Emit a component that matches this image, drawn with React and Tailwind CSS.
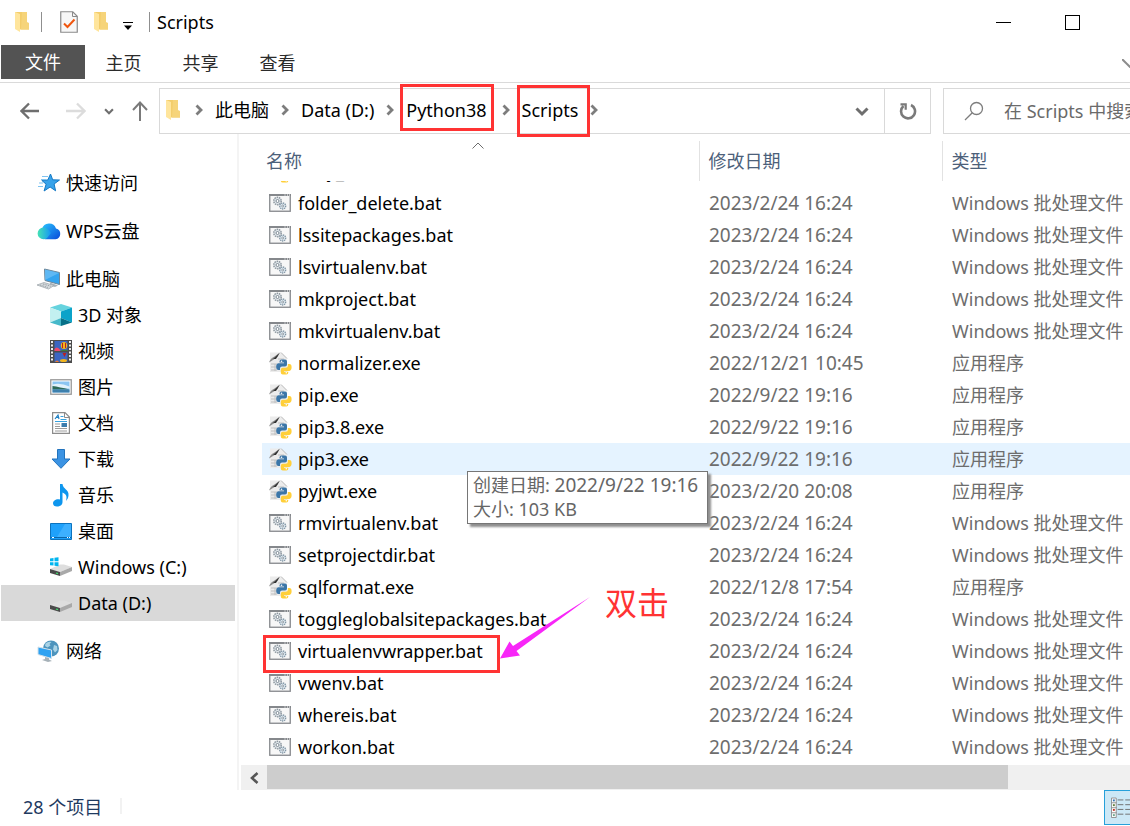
import React, { useState } from "react";

const files = [
  { name: "folder_delete.bat", date: "2023/2/24 16:24" },
  { name: "lssitepackages.bat", date: "2023/2/24 16:24" },
  { name: "lsvirtualenv.bat", date: "2023/2/24 16:24" },
  { name: "mkproject.bat", date: "2023/2/24 16:24" },
  { name: "mkvirtualenv.bat", date: "2023/2/24 16:24" },
  { name: "normalizer.exe", date: "2022/12/21 10:45" },
  { name: "pip.exe", date: "2022/9/22 19:16" },
  { name: "pip3.8.exe", date: "2022/9/22 19:16" },
  { name: "pip3.exe", date: "2022/9/22 19:16", hovered: true },
  { name: "pyjwt.exe", date: "2023/2/20 20:08" },
  { name: "rmvirtualenv.bat", date: "2023/2/24 16:24" },
  { name: "setprojectdir.bat", date: "2023/2/24 16:24" },
  { name: "sqlformat.exe", date: "2022/12/8 17:54" },
  { name: "toggleglobalsitepackages.bat", date: "2023/2/24 16:24" },
  { name: "virtualenvwrapper.bat", date: "2023/2/24 16:24", marked: true },
  { name: "vwenv.bat", date: "2023/2/24 16:24" },
  { name: "whereis.bat", date: "2023/2/24 16:24" },
  { name: "workon.bat", date: "2023/2/24 16:24" },
];

function FolderIcon() {
  return (
    <svg width="16" height="22" viewBox="0 0 16 22" className="shrink-0">
      <path d="M1 1h12v16l2 .5v1H5z" fill="#f3cd6b" />
      <path d="M8 1h5v10l2 1v6.5H7z" fill="#f6d47a" />
      <path d="M1 1l5 2v18l-5-3z" fill="#ffe59c" />
    </svg>
  );
}

function TaskIcon() {
  return (
    <svg width="18" height="22" viewBox="0 0 18 22">
      <path d="M.75.75h12l4.5 4.5v16H.75z" fill="#f7f7f7" stroke="#8a8a8a" strokeWidth="1.2" />
      <path d="M12.5 1v4.5H17" fill="none" stroke="#8a8a8a" />
      <path d="M4 12.5l3.5 3.5 7-7.5" fill="none" stroke="#f0560e" strokeWidth="2" />
    </svg>
  );
}

function CrumbArrow() {
  return (
    <svg width="8" height="12" viewBox="0 0 8 12" className="shrink-0">
      <path d="M1.5 1.5L6 6l-4.5 4.5" fill="none" stroke="#7d7d7d" strokeWidth="2.8" />
    </svg>
  );
}

function DownArrow({ size = 14 }) {
  return (
    <svg width={size} height={size} viewBox="0 0 14 14">
      <path d="M1.5 4.5L7 10l5.5-5.5" fill="none" stroke="#6e6e6e" strokeWidth="3" />
    </svg>
  );
}

function BatIcon() {
  return (
    <svg width="22" height="18" viewBox="0 0 22 18" className="shrink-0">
      <rect x=".75" y=".75" width="20.5" height="16.5" fill="#f7f7f7" stroke="#85888c" strokeWidth="1.3" />
      <path d="M0 1h22" stroke="#85888c" strokeWidth="2" />
      <path d="M15.5 1h1M18 1h1M20 1h1" stroke="#fff" />
      <circle cx="8.5" cy="7" r="3.7" fill="#dfe5ea" stroke="#8d979f" strokeWidth="1.5" strokeDasharray="1.5 .8" />
      <circle cx="8.5" cy="7" r="1.5" fill="#fff" stroke="#7f8b95" />
      <circle cx="13.7" cy="12" r="3" fill="#dce7ef" stroke="#8296a5" strokeWidth="1.3" strokeDasharray="1.3 .7" />
      <circle cx="13.7" cy="12" r="1" fill="#fff" stroke="#7f8b95" strokeWidth=".8" />
    </svg>
  );
}

function ExeIcon() {
  return (
    <svg width="24" height="24" viewBox="0 0 24 24" className="-ml-px -mr-px shrink-0">
      <path d="M2 1.5h11l6 6V21H2z" fill="#ececec" />
      <path d="M13 1.5l6 6" stroke="#b9b9b9" />
      <path d="M3 13h6M3 16h6M3 19h6M10 8h6M7 13v7" stroke="#c0c0c0" />
      <path d="M1 11.5c1-3 3-5 5.5-6L12 1.500 9.500 6 5 9z" fill="#8a8a8a" />
      <path d="M5 8l6.500-6-3.500 6z" fill="#333" />
      <path d="M13.500 8.500h3.500q2 0 2 2v3q0 2-2 2h-3q-2 0-2 2v1.500h-1.500q-2.300 0-2.300-3.200t2.300-3.500H16v-.8h-4.500v-1q0-2 2-2z" fill="#3b76a8" />
      <path d="M18.300 23.500h-3.500q-2 0-2-2v-2.800q0-2 2-2h3q2 0 2-2V13h1.500q2.300 0 2.300 3.300t-2.300 3.700H16v.7h4.300v.8q0 2-2 2z" fill="#ffcf3a" />
      <circle cx="13.500" cy="10.300" r=".8" fill="#fff" />
      <circle cx="18.300" cy="21.800" r=".8" fill="#fff" />
    </svg>
  );
}

function QuickAccessIcon() {
  return (
    <svg width="24" height="22" viewBox="0 0 24 22">
      <path d="M13.500 2l2.200 5.800 6.800.2-5.400 4 1.500 6.800-5.500-3.800-6 4 2-6.800-4.300-3.800 6-.4z" fill="#38a3ea" stroke="#1478c4" />
      <path d="M5 4.500h6M4 7.500h5M2 11h4M1 14.500h5" stroke="#7fc3f0" strokeWidth="1.200" />
    </svg>
  );
}

function CloudIcon() {
  return (
    <svg width="24" height="22" viewBox="0 0 24 22">
      <defs>
        <linearGradient id="cloudBack" x1="0" y1="0" x2="1" y2="1">
          <stop offset="0" stopColor="#29c3ff" />
          <stop offset="1" stopColor="#0a48d8" />
        </linearGradient>
        <linearGradient id="cloudFront" x1="0" y1="0" x2="1" y2="0">
          <stop offset="0" stopColor="#45e3b5" />
          <stop offset="1" stopColor="#1596f5" />
        </linearGradient>
      </defs>
      <path d="M5 9a7.300 7.300 0 0 1 14-.5 5.500 5.500 0 0 1-.5 10.800H8z" fill="url(#cloudBack)" />
      <path d="M6.500 7.500c3.500 0 5.500 2.500 7.500 5.500l-4 5q-1.200 1.300-3.500 1.300a5.900 5.900 0 0 1 0-11.800z" fill="url(#cloudFront)" />
    </svg>
  );
}

function ComputerIcon() {
  return (
    <svg width="24" height="22" viewBox="0 0 24 22">
      <path d="M7.500 1l15 3.500v12L8 12.500z" fill="#34a4ef" stroke="#6f8799" />
      <path d="M8 1.500l14 3.500-14 7z" fill="#7cc6f6" opacity=".6" />
      <path d="M13 14.500v3l5 1.500 3-1.500-4-1.500z" fill="#a9b3ba" />
      <path d="M0 17l7-2.500 10 3-5.500 3.500z" fill="#d5dadd" stroke="#a2a9ae" strokeWidth=".8" />
      <path d="M3 17l8 2.500M6 16l8 2.300" stroke="#9aa2a8" strokeDasharray="1.500 1" />
    </svg>
  );
}

function CubeIcon() {
  return (
    <svg width="22" height="22" viewBox="0 0 22 22">
      <path d="M11 0l11 3.500-11 4L0 3.500z" fill="#66d3de" />
      <path d="M0 3.500l11 4V14L0 18.500z" fill="#c3f0f0" />
      <path d="M22 3.500l-11 4V14l11 4.500z" fill="#0ba3c9" />
      <path d="M0 18.500L11 14v8z" fill="#46b9ca" />
      <path d="M22 18.500L11 14v8z" fill="#077189" />
    </svg>
  );
}

function VideoIcon() {
  return (
    <svg width="22" height="23" viewBox="0 0 22 23">
      <path d="M0 0h22v23H0z" fill="#4c4c4c" />
      <path d="M2 1v21M20 1v21" stroke="#ededed" strokeWidth="2" strokeDasharray="2 1.500" />
      <path d="M4.500 1h13v10h-13zM4.500 12.500h13V22h-13z" fill="#3c66c2" />
      <path d="M4.500 9q2-3 5 0l1 2h-6z" fill="#ef4a6d" />
      <path d="M10 11q3-2 7.500-1v1z" fill="#3e7d3a" />
      <ellipse cx="14" cy="5.500" rx="3.200" ry="3.500" fill="#f2b51c" />
      <path d="M12.500 3v5M15.500 3v5" stroke="#b92120" />
      <path d="M12.500 13h4l-2 4z" fill="#b92120" />
      <ellipse cx="13.500" cy="20.500" rx="3.500" ry="1.500" fill="#f2b51c" />
      <path d="M5 22q2-3 4 0z" fill="#ef7a2c" />
    </svg>
  );
}

function PictureIcon() {
  return (
    <svg width="22" height="16" viewBox="0 0 22 16">
      <rect x=".75" y=".75" width="20.500" height="14.500" fill="#fff" stroke="#9a9a9a" strokeWidth="1.300" />
      <path d="M2.500 2.500h17v11h-17z" fill="#8bc5f2" />
      <path d="M2.500 5.500q8-2 17 2v2h-17z" fill="#e1f1fb" />
      <path d="M2.500 7q7 1 17 3.500h-17z" fill="#2f6b59" />
      <path d="M2.500 10.500h17v3h-17z" fill="#3d80ad" />
    </svg>
  );
}

function DocumentIcon() {
  return (
    <svg width="18" height="22" viewBox="0 0 18 22">
      <path d="M.6.600h12.400l4.400 4.400v16.400H.6z" fill="#fff" stroke="#8c8c8c" strokeWidth="1.200" />
      <path d="M12.500 1v4.500H17" fill="none" stroke="#8c8c8c" />
      <path d="M3 7L6 3l1 4M4 5.500h3" fill="none" stroke="#1d80c3" strokeWidth="1.200" />
      <path d="M8.500 4.500h3M8.500 7.500h6M3 9.500h12" stroke="#37a2df" />
      <path d="M3 12h5M3 14.500h5M3 16.500h12M3 19h12" stroke="#9c9c9c" />
      <path d="M9.500 11h5.500v4H9.500z" fill="#3b7cad" />
    </svg>
  );
}

function DownloadIcon() {
  return (
    <svg width="20" height="20" viewBox="0 0 20 20">
      <path d="M6.500.500h7v9.500h5.500L10 19.300 1 10h5.500z" fill="#3b93e3" stroke="#2273bd" />
    </svg>
  );
}

function MusicIcon() {
  return (
    <svg width="18" height="23" viewBox="0 0 18 23">
      <path d="M8 0h2.500c.5 5.500 6.500 5 6 11.500-.2 2.500-1.300 4-2.500 5.500 1.200-5 .5-6.500-3.500-8.500v9.500c0 3-2.500 4.500-5.500 4.500-2.500 0-4-1.300-4-3.300 0-2.700 3.500-4.700 7-3.700z" fill="#0e96ee" />
    </svg>
  );
}

function DesktopIcon() {
  return (
    <svg width="22" height="17" viewBox="0 0 22 17">
      <path d="M.5.500h21v16H.5z" fill="#1fa1fb" stroke="#0b73bf" />
      <path d="M15 1h6v13H7z" fill="#3db0ff" />
      <path d="M1 14.500h20" stroke="#0b66aa" />
      <path d="M2 14.500h2M17 14.500h1M19 14.500h1" stroke="#fff" />
    </svg>
  );
}

function DriveIcon({ windows }) {
  return (
    <svg width="22" height="20" viewBox="0 0 22 20">
      <path d="M0 12l10-4.500h4L22 10l-12 5z" fill="#dedede" />
      <path d="M10 15l12-5v4l-12 5z" fill="#a9a9a9" />
      <path d="M0 12l10 3v4L0 16z" fill="#4a4a4a" />
      <path d="M6 16l2 .6" stroke="#44e06f" strokeWidth="1.300" />
      {windows && <path d="M0 1.500l3.500-.5v3.300H0zM4.500.800L8.500.300v4h-4zM0 5.300h3.500v3.300L0 8.200zM4.500 5.300h4v4l-4-.5z" fill="#00b5ef" />}
    </svg>
  );
}

function NetworkIcon() {
  return (
    <svg width="24" height="23" viewBox="0 0 24 23">
      <circle cx="14" cy="8.500" r="8" fill="#4d94bd" />
      <path d="M8.500 3.500q3-2.500 6-1.500l-2 2 1 1.500-3 2-2.500-1.500zM17 5l3 1 .5 4-2.500 2.500-2-3z" fill="#a9d3e6" />
      <path d="M1 7l13.500 3v8.500L1 14.500z" fill="#2ea2f2" stroke="#d3e2eb" />
      <path d="M8 17v2l-3 1 6 2 4-1-3-1.500v-1.300z" fill="#a6b1b8" />
    </svg>
  );
}

const sidebar = [
  { label: "快速访问", icon: <QuickAccessIcon /> },
  { label: "WPS云盘", icon: <CloudIcon /> },
  {
    label: "此电脑",
    icon: <ComputerIcon />,
    children: [
      { label: "3D 对象", icon: <CubeIcon /> },
      { label: "视频", icon: <VideoIcon /> },
      { label: "图片", icon: <PictureIcon /> },
      { label: "文档", icon: <DocumentIcon /> },
      { label: "下载", icon: <DownloadIcon /> },
      { label: "音乐", icon: <MusicIcon /> },
      { label: "桌面", icon: <DesktopIcon /> },
      { label: "Windows (C:)", icon: <DriveIcon windows /> },
      { label: "Data (D:)", icon: <DriveIcon />, selected: true },
    ],
  },
  { label: "网络", icon: <NetworkIcon /> },
];

function SidebarLink({ item, nested }) {
  return (
    <a
      href="#"
      className={`flex h-9 items-center gap-1 ${nested ? "pl-12" : "pl-9"} ${item.selected ? "bg-[#d9d9d9]" : ""}`}
    >
      <span className="flex w-6 shrink-0 justify-center">{item.icon}</span>
      <span className="pl-px">{item.label}</span>
    </a>
  );
}

function Sidebar() {
  return (
    <nav className="w-[239px] shrink-0 border-r-2 border-[#f4f4f4] pt-[31px] pl-px pr-0.5">
      <ul className="flex flex-col gap-3">
        {sidebar.map((item) => (
          <li key={item.label}>
            <SidebarLink item={item} />
            {item.children && (
              <ul>
                {item.children.map((child) => (
                  <li key={child.label}>
                    <SidebarLink item={child} nested />
                  </li>
                ))}
              </ul>
            )}
          </li>
        ))}
      </ul>
    </nav>
  );
}

function TitleBar() {
  return (
    <header className="flex h-[45px] items-center pb-px pl-[14px]">
      <FolderIcon />
      <span className="ml-[11px] h-5 w-px bg-[#8f8f8f]" />
      <button aria-label="属性" className="ml-[18px]"><TaskIcon /></button>
      <button aria-label="新建文件夹" className="ml-[15px]"><FolderIcon /></button>
      <button aria-label="自定义快速访问工具栏" className="ml-[14px] mt-2">
        <svg width="10" height="8" viewBox="0 0 10 8">
          <path d="M0 .500h10" stroke="#000" />
          <path d="M1 3.500h8L5 8z" />
        </svg>
      </button>
      <span className="ml-4 h-5 w-px bg-[#8f8f8f]" />
      <h1 className="ml-[7px]">Scripts</h1>
      <div className="ml-auto flex pr-[23px]">
        <button aria-label="最小化" className="flex h-11 w-[69px] items-center justify-center">
          <span className="h-px w-[15px] bg-black" />
        </button>
        <button aria-label="最大化" className="flex h-11 w-[69px] items-center justify-center">
          <span className="h-[15px] w-[15px] border border-black" />
        </button>
      </div>
    </header>
  );
}

function Ribbon() {
  return (
    <div className="flex h-[38px] items-start border-b border-[#dadada] pl-px text-[#2b2b2b]">
      <button className="h-[34px] w-21 bg-[#535353] text-white">文件</button>
      <button className="h-9 w-[77px]">主页</button>
      <button className="h-9 w-[77px]">共享</button>
      <button className="h-9 w-[77px]">查看</button>
      <button aria-label="展开功能区" className="ml-auto self-center">
        <svg width="8" height="9" viewBox="0 0 8 9">
          <path d="M0 0l9 9" stroke="#8c8c8c" strokeWidth="2" />
        </svg>
      </button>
    </div>
  );
}

function AddressBar() {
  const [query, setQuery] = useState("");

  return (
    <div className="mt-[5px] flex h-[46px]">
      <div className="flex w-[159px] shrink-0 items-center pl-5">
        <button aria-label="后退">
          <svg width="20" height="18" viewBox="0 0 20 18" fill="none" stroke="#6e6e6e" strokeWidth="2.300">
            <path d="M19 9H2M9 1.500L1.500 9 9 16.500" />
          </svg>
        </button>
        <button aria-label="前进" className="ml-[26px]">
          <svg width="20" height="18" viewBox="0 0 20 18" fill="none" stroke="#dcdcdc" strokeWidth="2.300">
            <path d="M0 9h18M11 1.500L18.500 9 11 16.500" />
          </svg>
        </button>
        <button aria-label="最近浏览的位置" className="ml-[18px]"><DownArrow size={10} /></button>
        <button aria-label="上移" className="ml-[18px]">
          <svg width="16" height="20" viewBox="0 0 16 20" fill="none" stroke="#7a7a7a" strokeWidth="2">
            <path d="M8 20V2M1 9l7-7.500L15 9" />
          </svg>
        </button>
      </div>
      <div className="flex min-w-0 flex-1 border border-[#d9d9d9]">
        <div className="flex flex-1 items-center gap-3 pb-0.5 pl-[5px]">
          <FolderIcon />
          <span className="ml-0.5 flex"><CrumbArrow /></span>
          <button>此电脑</button>
          <CrumbArrow />
          <button>Data (D:)</button>
          <CrumbArrow />
          <button className="relative pr-[3px]">
            Python38
            <span className="absolute -left-1.5 -right-1 -top-3 -bottom-[7px] border-3 border-[#ff3333]" />
          </button>
          <CrumbArrow />
          <button className="relative">
            Scripts
            <span className="absolute -left-[5px] -right-3 -top-[11px] -bottom-[13px] border-3 border-[#ff3333]" />
          </button>
          <CrumbArrow />
        </div>
        <button aria-label="以前的位置" className="px-[15px]"><DownArrow /></button>
        <button aria-label="刷新" className="flex w-[46px] items-center justify-center border-l border-[#d9d9d9]">
          <svg width="18" height="18" viewBox="0 0 18 18" fill="none" stroke="#7a7a7a" strokeWidth="2.600">
            <path d="M12 3A7 7 0 1 1 4.500 4" />
            <path d="M1.500 2.300h5.200v5.500" strokeWidth="2.200" />
          </svg>
        </button>
      </div>
      <label className="ml-3 flex w-[187px] shrink-0 items-center border-y border-l border-[#d9d9d9] pl-5">
        <svg width="20" height="20" viewBox="0 0 20 20" fill="none" stroke="#7d7d7d" strokeWidth="1.300" className="shrink-0">
          <circle cx="12.500" cy="7.500" r="6" />
          <path d="M8.300 11.800L1 19" />
        </svg>
        <input
          type="text"
          aria-label="搜索"
          placeholder="在 Scripts 中搜索"
          value={query}
          onChange={(e) => setQuery(e.target.value)}
          className="ml-5 w-full min-w-0 outline-none placeholder:text-[#6a6a6a]"
        />
      </label>
    </div>
  );
}

function FileRow({ file }) {
  const isBat = file.name.endsWith(".bat");
  return (
    <tr className={`h-8 ${file.hovered ? "bg-[#e5f3ff]" : ""}`}>
      <td className="relative p-0 pl-[7px]">
        <div className="flex items-center gap-[7px]">
          {isBat ? <BatIcon /> : <ExeIcon />}
          <span className="leading-8">{file.name}</span>
        </div>
        {file.hovered && (
          <div role="tooltip" className="absolute left-[205px] top-7 z-10 w-[241px] border border-[#767676] bg-white px-[5px] pt-px pb-0.5 leading-6 text-[#666] shadow-[3px_3px_2px_#8f8f8f]">
            <p className="whitespace-nowrap">创建日期: <span className="text-[19px]">2022/9/22 19:16</span></p>
            <p>大小: 103 KB</p>
          </div>
        )}
        {file.marked && (
          <>
            <span className="absolute left-px top-0 h-[38px] w-[237px] border-3 border-[#ff3333]" />
            <svg width="92" height="64" viewBox="0 0 92 64" className="absolute -top-[38px] left-[238px]">
              <path d="M90 0L13 49 9.500 44.500 0 61.500 20 58.500 16.500 54z" fill="#f826f8" />
            </svg>
            <strong className="absolute -top-[52px] left-[343px] text-[32px] leading-10 font-normal text-[#ff3333]">双击</strong>
          </>
        )}
      </td>
      <td className="p-0 pl-[10px] text-[19px] leading-8 text-[#6d6d6d]">{file.date}</td>
      <td className="p-0 pl-[10px] whitespace-nowrap text-[#6d6d6d]">{isBat ? "Windows 批处理文件" : "应用程序"}</td>
    </tr>
  );
}

function FileList() {
  return (
    <main className="min-w-0 flex-1 overflow-hidden">
      <table className="mt-[7px] ml-[23px] w-full table-fixed border-collapse text-left">
        <colgroup>
          <col className="w-[437px]" />
          <col className="w-[243px]" />
          <col />
        </colgroup>
        <thead>
          <tr className="h-10 text-[#4c607a]">
            <th className="relative p-0 pl-1 font-normal">
              名称
              <svg width="12" height="7" viewBox="0 0 12 7" className="absolute top-px left-[210px]">
                <path d="M.500 6.500L6 1l5.500 5.500" fill="none" stroke="#6d6d6d" />
              </svg>
            </th>
            <th className="border-l border-[#e2e2e2] p-0 pl-[9px] font-normal">修改日期</th>
            <th className="border-l border-[#e2e2e2] p-0 pl-[9px] font-normal">类型</th>
          </tr>
        </thead>
        <tbody>
          {/* row scrolled almost out of view under the header */}
          <tr>
            <td colSpan={3} className="p-0 pl-[7px]">
              <div className="flex h-[6px] items-end overflow-hidden">
                <div className="flex h-8 shrink-0 items-center gap-[7px]">
                  <ExeIcon />
                  <span className="leading-8">easy_install.exe</span>
                </div>
              </div>
            </td>
          </tr>
          {files.map((file) => (
            <FileRow key={file.name} file={file} />
          ))}
        </tbody>
      </table>
      <div className="mt-[2px] ml-0.5 flex h-[25px] bg-[#f0f0f0]">
        <button aria-label="向左滚动" className="flex w-[26px] shrink-0 items-center justify-center">
          <svg width="10" height="12" viewBox="0 0 10 12">
            <path d="M8.500 1L3 6l5.500 5" fill="none" stroke="#565656" strokeWidth="2.600" />
          </svg>
        </button>
        <span className="mb-px w-5/6 bg-[#cdcdcd]" />
      </div>
    </main>
  );
}

function StatusBar() {
  return (
    <footer className="flex h-9 items-start text-[#1f3a5f]">
      <span className="pl-[23px] leading-[34px]">28 个项目</span>
      <span className="mt-2 ml-[18px] h-4 w-[2px] bg-[#f2f2f2]" />
      <button aria-label="详细信息" className="ml-auto flex h-[35px] w-[26px] items-center border border-r-0 border-[#26a0da] bg-[#cce8f6] pl-[6px]">
        <svg width="20" height="22" viewBox="0 0 20 22">
          <path d="M.500.500h5v20.500h-5zM0 5.500h6M0 10.700h6M0 16h6" fill="#fff" stroke="#909090" />
          <path d="M2 3h2" stroke="#3474b5" strokeWidth="2" />
          <path d="M2 8h2" stroke="#5f7f3c" strokeWidth="2" />
          <path d="M2 13h2" stroke="#c0342a" strokeWidth="2" />
          <path d="M2 18.500h2" stroke="#6aa58b" strokeWidth="2" />
          <path d="M7 2.500h6M15 2.500h5M7 7.500h6M15 7.500h5M7 12.500h6M15 12.500h5M7 17.500h6M15 17.500h5" stroke="#6e6e6e" />
        </svg>
      </button>
    </footer>
  );
}

export default function App() {
  return (
    <div className="w-full overflow-hidden bg-white font-['Noto_Sans','Noto_Sans_CJK_SC',sans-serif] text-[18px] leading-7 text-black">
      <TitleBar />
      <Ribbon />
      <AddressBar />
      <div className="flex">
        <Sidebar />
        <FileList />
      </div>
      <StatusBar />
    </div>
  );
}
